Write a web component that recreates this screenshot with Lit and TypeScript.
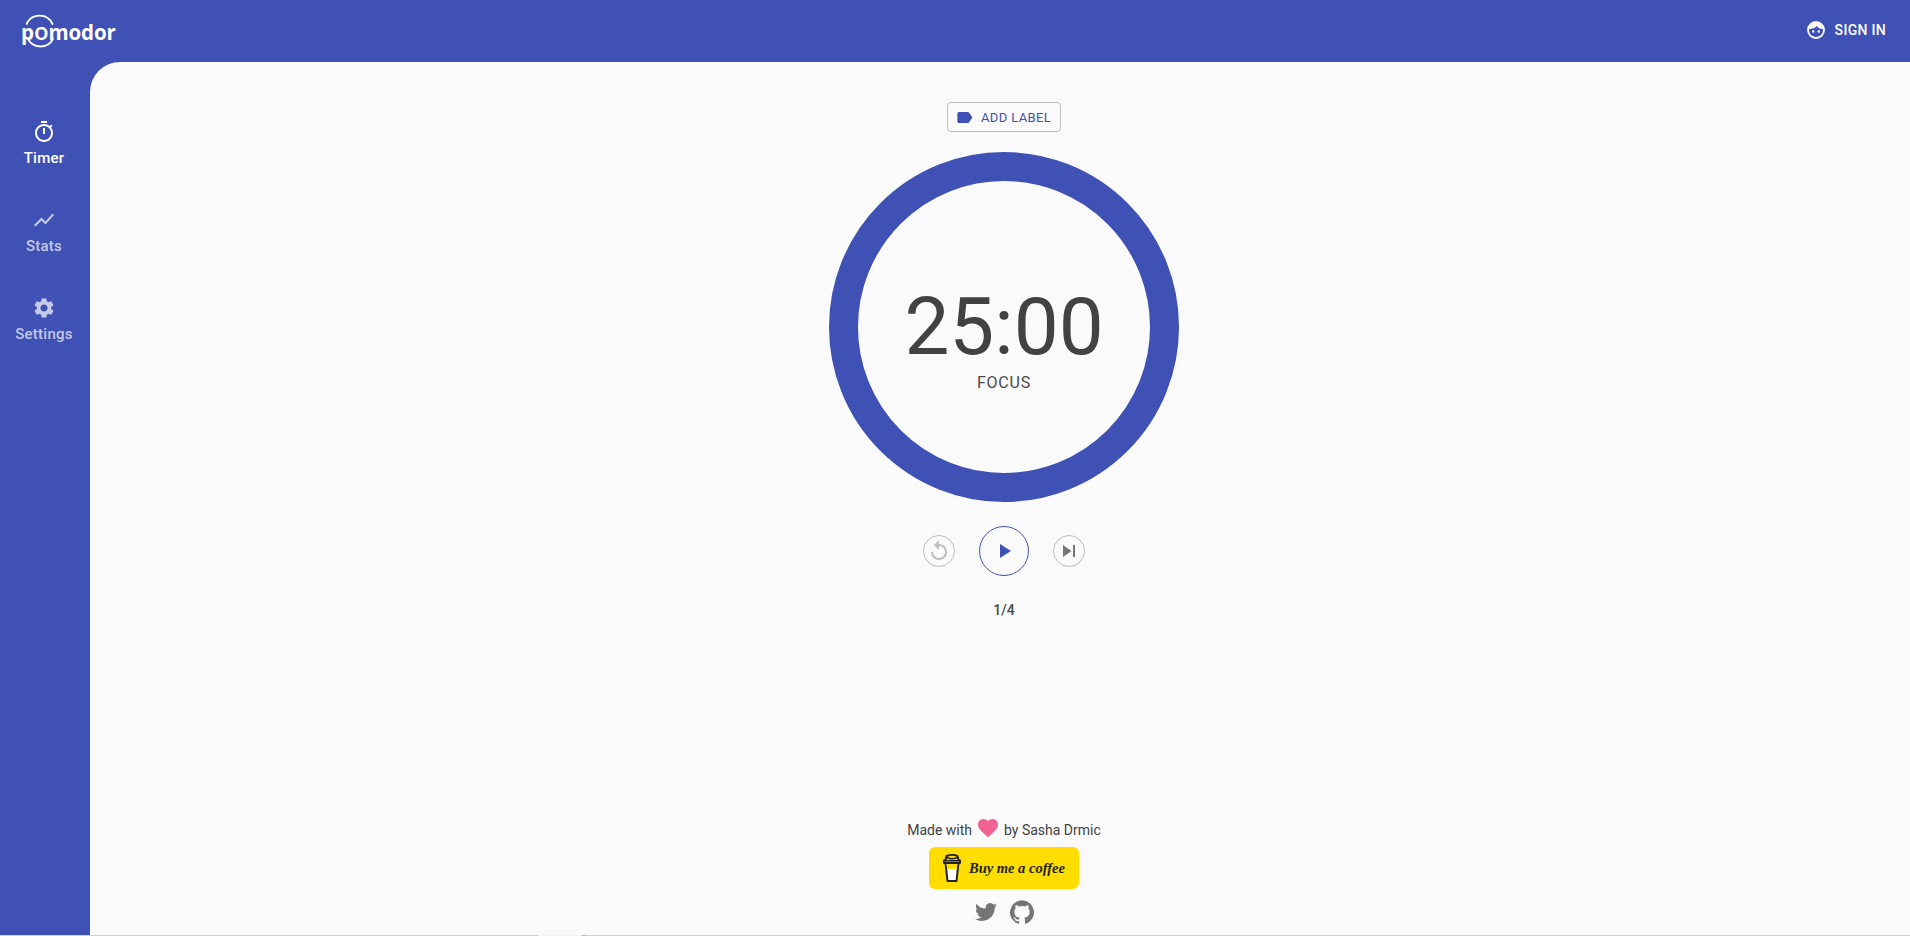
import { LitElement, html, css } from "lit";
import { customElement } from "lit/decorators.js";

const icon = (d: string, size: number, cls = "") =>
  html`<svg class=${cls} width=${size} height=${size} viewBox="0 0 24 24" fill="currentColor"><path d=${d}></path></svg>`;

const P = {
  timer: "M15 1H9v2h6V1zm-4 13h2V8h-2v6zm8.03-6.61l1.42-1.42c-.43-.51-.9-.99-1.41-1.41l-1.42 1.42C16.07 4.74 14.12 4 12 4c-4.97 0-9 4.03-9 9s4.02 9 9 9 9-4.03 9-9c0-2.12-.74-4.07-1.97-5.61zM12 20c-3.87 0-7-3.13-7-7s3.13-7 7-7 7 3.13 7 7-3.13 7-7 7z",
  chart: "M3.5 18.49l6-6.01 4 4L22 6.92l-1.41-1.41-7.09 7.97-4-4L2 16.99z",
  gear: "M19.14 12.94c.04-.3.06-.61.06-.94 0-.32-.02-.64-.07-.94l2.03-1.58c.18-.14.23-.41.12-.61l-1.92-3.32c-.12-.22-.37-.29-.59-.22l-2.39.96c-.5-.38-1.03-.7-1.62-.94l-.36-2.54c-.04-.24-.24-.41-.48-.41h-3.84c-.24 0-.43.17-.47.41l-.36 2.54c-.59.24-1.13.57-1.62.94l-2.39-.96c-.22-.08-.47 0-.59.22L2.74 8.87c-.12.21-.08.47.12.61l2.03 1.58c-.05.3-.09.63-.09.94s.02.64.07.94l-2.03 1.58c-.18.14-.23.41-.12.61l1.92 3.32c.12.22.37.29.59.22l2.39-.96c.5.38 1.03.7 1.62.94l.36 2.54c.05.24.24.41.48.41h3.84c.24 0 .44-.17.47-.41l.36-2.54c.59-.24 1.13-.56 1.62-.94l2.39.96c.22.08.47 0 .59-.22l1.92-3.32c.12-.22.07-.47-.12-.61l-2.01-1.58zM12 15.6c-1.98 0-3.6-1.62-3.6-3.6s1.62-3.6 3.6-3.6 3.6 1.62 3.6 3.6-1.62 3.6-3.6 3.6z",
  label: "M17.63 5.84C17.27 5.33 16.67 5 16 5L5 5.01C3.9 5.01 3 5.9 3 7v10c0 1.1.9 1.99 2 1.99L16 19c.67 0 1.27-.33 1.63-.84L22 12l-4.37-6.16z",
  play: "M8 5v14l11-7z",
  skip: "M6 18l8.5-6L6 6v12zM16 6v12h2V6h-2z",
  replay: "M12 5V1L7 6l5 5V7c3.31 0 6 2.69 6 6s-2.69 6-6 6-6-2.69-6-6H4c0 4.42 3.58 8 8 8s8-3.58 8-8-3.58-8-8-8z",
  heart: "M12 21.35l-1.45-1.32C5.4 15.36 2 12.28 2 8.5 2 5.42 4.42 3 7.5 3c1.74 0 3.41.81 4.5 2.09C13.09 3.81 14.76 3 16.5 3 19.58 3 22 5.42 22 8.5c0 3.78-3.4 6.86-8.55 11.54L12 21.35z",
  twitter: "M23.95 4.57a10 10 0 0 1-2.82.77 4.96 4.96 0 0 0 2.16-2.72 9.9 9.9 0 0 1-3.12 1.18 4.92 4.92 0 0 0-8.38 4.48A13.96 13.96 0 0 1 1.64 3.16a4.82 4.82 0 0 0-.66 2.47c0 1.71.87 3.21 2.19 4.1a4.9 4.9 0 0 1-2.23-.62v.06a4.92 4.92 0 0 0 3.95 4.83 5 5 0 0 1-2.21.08 4.94 4.94 0 0 0 4.6 3.42A9.87 9.87 0 0 1 0 19.54a13.94 13.94 0 0 0 7.55 2.21c9.05 0 14-7.5 14-13.98 0-.21 0-.42-.02-.63a9.94 9.94 0 0 0 2.46-2.55z",
  github: "M12 .3a12 12 0 0 0-3.79 23.4c.6.1.82-.26.82-.58v-2.03c-3.34.73-4.04-1.61-4.04-1.61-.55-1.39-1.33-1.76-1.33-1.76-1.09-.74.08-.73.08-.73 1.2.09 1.84 1.24 1.84 1.24 1.07 1.83 2.81 1.3 3.49 1 .11-.78.42-1.31.76-1.61-2.67-.3-5.47-1.33-5.47-5.93 0-1.31.47-2.38 1.24-3.22-.14-.3-.54-1.52.1-3.18 0 0 1-.32 3.3 1.23a11.5 11.5 0 0 1 6 0c2.28-1.55 3.29-1.23 3.29-1.23.64 1.66.24 2.88.12 3.18a4.65 4.65 0 0 1 1.23 3.22c0 4.61-2.8 5.63-5.48 5.92.42.36.81 1.1.81 2.22v3.29c0 .32.22.69.83.57A12 12 0 0 0 12 .3z",
};

@customElement("app-root")
export class AppRoot extends LitElement {
  static styles = css`
    :host { display: block; width: 100%; height: 936px; overflow: hidden; background: #3f51b5; font-family: Roboto, sans-serif; }
    .page { display: grid; grid-template-columns: 90px 1fr; grid-template-rows: 62px 1fr 1px; height: 936px; }
    .top { grid-column: 1 / 3; display: flex; align-items: center; justify-content: space-between; padding: 0 24px 2px 21px; box-sizing: border-box; color: #fff; }
    .logo { position: relative; margin-top: 2px; font-family: "Open Sans", sans-serif; font-weight: 700; font-size: 20.5px; line-height: 30px; letter-spacing: -0.1px; }
    .logo .o { font-size: 24px; line-height: 30px; font-weight: 600; }
    .logo svg { position: absolute; left: 5px; top: -2px; }
    .signin { display: flex; align-items: center; gap: 10px; font-size: 14px; font-weight: 500; letter-spacing: .3px; }
    .side { display: flex; flex-direction: column; padding: 58px 2px 0 0; gap: 35px; }
    .nav { display: flex; flex-direction: column; align-items: center; height: 53px; color: rgba(255,255,255,.7); font-size: 15px; font-weight: 500; letter-spacing: .25px; line-height: 20px; }
    .nav.on { color: #fff; }
    .nav svg { margin-bottom: 4px; }
    main { background: #fafafa; border-top-left-radius: 30px; display: flex; flex-direction: column; align-items: center; padding: 40px 0 0 8px; min-height: 0; }
    .add { width: 114px; height: 30px; box-sizing: border-box; border: 1px solid #bdbdbd; border-radius: 4px; display: flex; align-items: center; padding-left: 7px; gap: 7px; color: #3f51b5; font-size: 13px; letter-spacing: .35px; white-space: nowrap; }
    .ring { margin-top: 20px; width: 350px; height: 350px; box-sizing: border-box; border: 29px solid #3f51b5; border-radius: 50%; display: flex; flex-direction: column; align-items: center; color: #424242; }
    .time { font-size: 80px; font-weight: 400; line-height: 94px; margin-top: 99px; }
    .phase { font-size: 16px; letter-spacing: .8px; line-height: 20px; color: #4a4a4a; margin-top: -1px; }
    .ctrl { margin-top: 24px; display: flex; align-items: center; gap: 24px; }
    .btn { box-sizing: border-box; border-radius: 50%; display: flex; align-items: center; justify-content: center; }
    .sm { width: 32px; height: 32px; border: 1px solid #bdbdbd; }
    .big { width: 50px; height: 50px; border: 1px solid #3f51b5; color: #3f51b5; }
    .reset { color: #bdbdbd; }
    .next { color: #757575; }
    .count { margin-top: 25px; font-size: 14px; font-weight: 500; line-height: 18px; color: #4a4a4a; }
    .foot { margin-top: auto; display: flex; flex-direction: column; align-items: center; color: #424242; padding-bottom: 11px; }
    .made { display: flex; align-items: center; font-size: 14px; line-height: 24px; gap: 4px; }
    .heart { color: #f06292; margin-top: -5px; }
    .coffee { margin-top: 5px; width: 150px; height: 42px; box-sizing: border-box; background: #ffdd00; border-radius: 6px; display: flex; align-items: center; padding-left: 13px; gap: 7px; color: #222; font-family: "Liberation Serif", serif; font-style: italic; font-weight: 700; font-size: 14.5px; white-space: nowrap; }
    .social { margin-top: 11px; display: flex; align-items: center; gap: 13px; color: #757575; padding-left: 1px; }
    .edge { grid-column: 1 / 3; background: linear-gradient(to right, #cfcfcf 538px, #f2f2f2 538px, #f2f2f2 582px, #b0b0b0 582px, #b0b0b0 585px, #cfcfcf 585px); }
  `;

  render() {
    return html`
      <div class="page">
        <header class="top">
          <div class="logo">p<span class="o">o</span>modor
            <svg width="34" height="36" viewBox="0 0 34 36" fill="none" stroke="#fff" stroke-width="1.9" stroke-linecap="round">
              <path d="M.5 10 A 14.3 14.3 0 0 1 26.5 10"></path>
              <path d="M2 25 A 14.2 14.2 0 0 0 27 25"></path>
            </svg>
          </div>
          <div class="signin">
            <svg width="18" height="18" viewBox="0 0 18 18">
              <circle cx="9" cy="9" r="8" fill="none" stroke="#fff" stroke-width="1.8"></circle>
              <path d="M2 8 C 2 3, 6 1, 9 1 S 16 3, 16 8 C 13 8, 11 7, 10 5 C 8 7, 5 8, 2 8z" fill="#fff"></path>
              <circle cx="6.2" cy="10.5" r="1.2" fill="#fff"></circle>
              <circle cx="11.8" cy="10.5" r="1.2" fill="#fff"></circle>
            </svg>
            SIGN IN
          </div>
        </header>
        <nav class="side">
          <div class="nav on">${icon(P.timer, 24)}Timer</div>
          <div class="nav">${icon(P.chart, 24)}Stats</div>
          <div class="nav">${icon(P.gear, 24)}Settings</div>
        </nav>
        <main>
          <div class="add">${icon(P.label, 19)}ADD LABEL</div>
          <div class="ring">
            <div class="time">25:00</div>
            <div class="phase">FOCUS</div>
          </div>
          <div class="ctrl">
            <div class="btn sm reset">${icon(P.replay, 24)}</div>
            <div class="btn big">${icon(P.play, 24)}</div>
            <div class="btn sm next">${icon(P.skip, 24)}</div>
          </div>
          <div class="count">1/4</div>
          <footer class="foot">
            <div class="made">Made with ${icon(P.heart, 24, "heart")} by Sasha Drmic</div>
            <div class="coffee">
              <svg width="20" height="30" viewBox="0 0 20 30" stroke-linejoin="round" stroke-linecap="round">
                <path d="M3.5 10 L5.5 28 H14.5 L16.5 10z" fill="#fff" stroke="#222" stroke-width="2"></path>
                <path d="M4.6 11 L5.2 16 H14.8 L15.4 11z" fill="#ffdd00"></path>
                <path d="M2 7.5 H18 V10 H2z" fill="#ffdd00" stroke="#222" stroke-width="2"></path>
                <path d="M3.5 7 L4.5 3 C 8 1.5, 13 1.5, 15.5 3 L16.5 7" fill="#ffdd00" stroke="#222" stroke-width="2"></path>
                <path d="M5 4.5 C 8 6, 12 6, 15 4.5" fill="none" stroke="#222" stroke-width="1.4"></path>
              </svg>
              Buy me a coffee
            </div>
            <div class="social">${icon(P.twitter, 22)}${icon(P.github, 24)}</div>
          </footer>
        </main>
        <div class="edge"></div>
      </div>
    `;
  }
}
